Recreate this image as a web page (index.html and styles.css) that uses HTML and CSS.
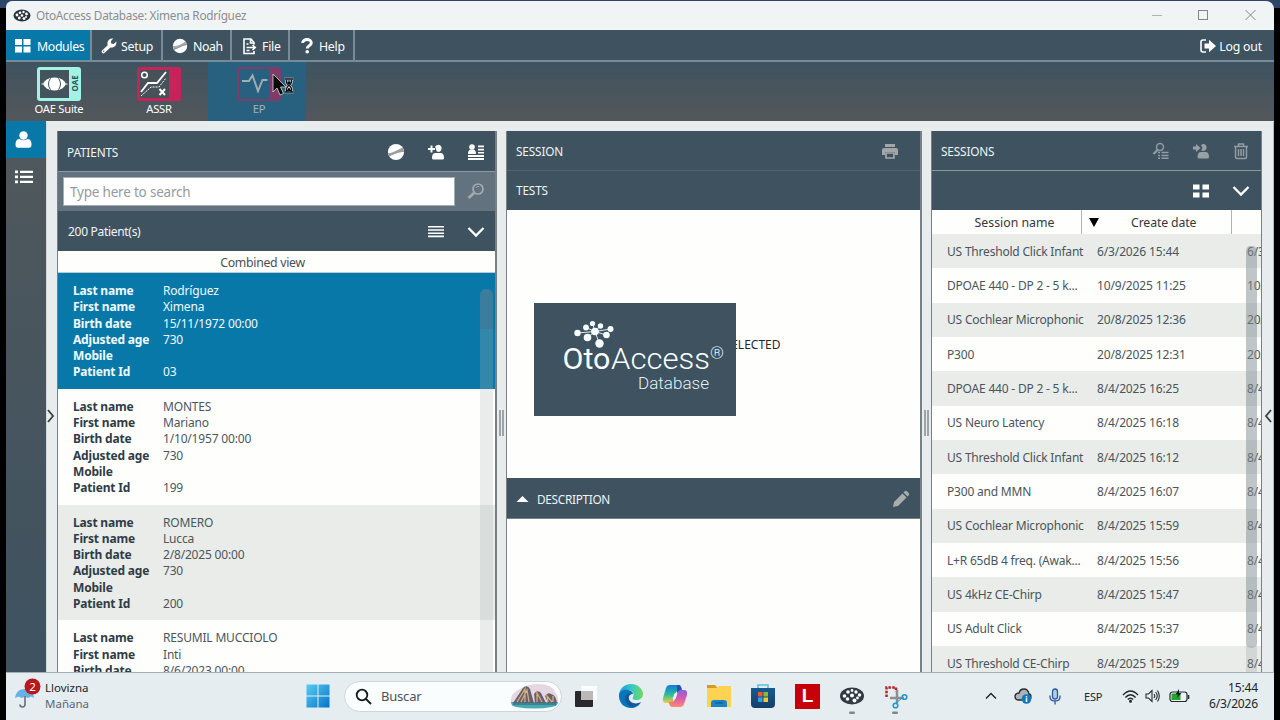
FILE: index.html
```
<!DOCTYPE html>
<html lang="es">
<head>
<meta charset="utf-8">
<title>OtoAccess Database</title>
<link rel="stylesheet" href="styles.css">
</head>
<body>
<div class="screen">
<div class="window">
  <header class="titlebar">
    <svg class="app-icon" width="18" height="13" viewBox="0 0 18 13"><ellipse cx="9" cy="6.5" rx="8.5" ry="6" fill="#29343c"/><g fill="#fff"><circle cx="4" cy="6" r="1.4"/><circle cx="7" cy="3.7" r="1.3"/><circle cx="10.5" cy="3" r="1.2"/><circle cx="13.5" cy="5" r="1.4"/><circle cx="9" cy="6.5" r="1.3"/><circle cx="6.3" cy="9" r="1.4"/><circle cx="11" cy="9.6" r="1.4"/><circle cx="13" cy="8" r="1"/></g></svg>
    <span class="title">OtoAccess Database: Ximena Rodríguez</span>
    <svg class="winctl" width="110" height="14" viewBox="0 0 110 14" fill="none" stroke="#858788"><path d="M3 7.5h10" stroke="#b0b1b2"/><rect x="49.500" y="2.500" width="9" height="9"/><path d="M96.500 2l10 10M106.500 2l-10 10"/></svg>
  </header>
  <nav class="menu">
    <div class="item active m1"><svg width="16" height="14" viewBox="0 0 16 14" fill="#fff"><path d="M0 0h7v6H0zM8.500 0h7v6h-7zM0 7.500h7v6H0zM8.500 7.500h7v6h-7z"/></svg>Modules</div>
    <div class="item m2"><svg width="16" height="16" viewBox="0 0 16 16"><path d="M2.500 13.500L9 7.500" stroke="#fff" stroke-width="3.600" stroke-linecap="round"/><path d="M15.300 3.600L12.700 6l-2.400-.4-.4-2.300L12.200.6A5 5 0 0 0 6.700 7.200L9 9.400a5 5 0 0 0 6.300-5.800z" fill="#fff"/><circle cx="2.700" cy="13.300" r=".7" fill="#3e5260"/></svg>Setup</div>
    <div class="item m3"><svg width="16" height="16" viewBox="0 0 16 16"><circle cx="8" cy="8" r="7.200" fill="#fff"/><path d="M.8 8C5 8.500 9 6 13.700 3.500L15.200 7C10 7.500 7 10 2 12z" fill="#a9adb0"/><path d="M1.500 11C6 11 9 7 15 6" stroke="#7c888f" fill="none" stroke-width=".6"/></svg>Noah</div>
    <div class="item m4"><svg width="14" height="17" viewBox="0 0 14 17" fill="none" stroke="#fff" stroke-width="1.600"><path d="M11 6.500V4.500L8 1H1v14.500h10V13M7.500 1v4H11M3.500 6h2M3.500 9.500h8M9.500 7l2.700 2.500L9.500 12M3.500 12.500h3"/></svg>File</div>
    <div class="item m5"><svg width="12" height="16" viewBox="0 0 12 16"><path d="M1.700 5C1.500.6 10.500.2 10.300 5c0 2.500-4.100 2.800-4.100 5.500" fill="none" stroke="#fff" stroke-width="2.900"/><circle cx="6.200" cy="13.700" r="1.800" fill="#fff"/></svg>Help</div>
    <div class="logout"><svg width="16" height="14" viewBox="0 0 16 14"><path d="M6 1H3Q1 1 1 3v8q0 2 2 2h3" fill="none" stroke="#fff" stroke-width="1.600"/><path d="M4.500 4.500H9V.8L16 7l-7 6.200V9.500H4.500z" fill="#fff"/></svg>Log out</div>
  </nav>
  <div class="modules">
    <div class="module"><svg width="46" height="36" viewBox="0 0 46 36"><rect x="1" y="1" width="44" height="34" rx="3" fill="#a2f2e5"/><rect x="4" y="4" width="29" height="28" fill="#44545d"/><path d="M5.500 18h26" stroke="#fff"/><ellipse cx="18.500" cy="18" rx="11" ry="6.500" fill="#fff"/><path d="M14.500 12.300q-4 5.700 0 11.400M22.500 12.300q4 5.700 0 11.400" stroke="#44545d" fill="none"/><text transform="translate(42 25.500) rotate(-90)" class="tag">OAE</text></svg><span>OAE Suite</span></div>
    <div class="module"><svg width="46" height="36" viewBox="0 0 46 36"><rect x="1" y="1" width="44" height="34" rx="3" fill="#c6235a"/><rect x="4" y="4" width="29" height="28" fill="#465158"/><g fill="none" stroke="#fff"><circle cx="8.500" cy="9" r="2.800" stroke-width="1.500"/><path d="M5 26l7-9h9l9-11" stroke-width="1.800"/><path d="M5 30l10-9h8l7-9" stroke-dasharray="2 1"/><path d="M23.500 23l5.500 6M29 23l-5.500 6" stroke-width="2"/></g><path d="M36 10v16M39 10v16" stroke="#d52761"/></svg><span>ASSR</span></div>
    <div class="module ep"><svg width="46" height="36" viewBox="0 0 46 36"><rect x="1" y="1" width="44" height="34" rx="3" fill="#803c66"/><rect x="3" y="3" width="31" height="30" fill="#28617f"/><path d="M6 15h7l3.500-5.500L22 25l4.500-11h5" fill="none" stroke="#a1afb5" stroke-width="1.900"/></svg><span>EP</span>
      <svg class="cursor" width="24" height="26" viewBox="0 0 24 26"><path d="M1 1v18l4-4 3 7 3.500-1.600-3-6.400H14z" fill="#080909" stroke="#d7d9da" stroke-width=".8"/><path d="M12.500 6h9M12.500 19h9M14.500 7v2.500l2 3-2 3v3M19.500 7v2.500l-2 3 2 3v3" stroke="#d5dadd" stroke-width="2.600" fill="none"/><path d="M12.500 6h9M12.500 19h9M14.500 7v2.500l2 3-2 3v3M19.500 7v2.500l-2 3 2 3v3" stroke="#101214" stroke-width="1.300" fill="none"/><path d="M14.500 18l2.500-3 2.500 3zM15 9h4l-2 3z"/></svg></div>
  </div>
  <main class="main">
    <aside class="side">
      <div class="sidebtn on"><svg width="17" height="17" viewBox="0 0 17 17" fill="#fff"><circle cx="8.500" cy="4.500" r="4.200"/><path d="M.5 13.500Q.5 8 4.500 8q4 2.500 8 0 4 0 4 5.500 0 3.300-2.500 3.300H3Q.5 16.800.5 13.500z"/></svg></div>
      <div class="sidebtn"><svg width="18" height="14" viewBox="0 0 18 14" fill="#fff"><path d="M0 .5h3v2.800H0zM0 5.500h3v2.800H0zM0 10.500h3v2.800H0zM5 .7h13V3H5zM5 5.700h13V8H5zM5 10.700h13V13H5z"/></svg></div>
    </aside>
    <div class="gap-left"><svg width="8" height="14" viewBox="0 0 8 14"><path d="M1 1l5 6-5 6" fill="none" stroke="#333f47" stroke-width="1.800"/></svg></div>
    <section class="panel patients">
      <div class="phead"><span>PATIENTS</span><div class="tools">
        <svg width="18" height="18" viewBox="0 0 16 16"><circle cx="8" cy="8" r="7.200" fill="#fff"/><path d="M.8 9C5 9 9 6.500 14 4L15.200 8C10 8 7 10 2 11.800z" fill="#999fa3"/></svg>
        <svg width="18" height="18" viewBox="0 0 18 18" fill="#fff"><path d="M1 6h7M4.500 2.500v7" stroke="#fff" stroke-width="2"/><path d="M8 3.500Q12 0 14.500 4 15 8 12 9q-3 0-3-3z"/><path d="M5 15q0-5 3.500-5h5q3.500 0 3.500 5 0 1.500-1.500 1.500h-9Q5 16.500 5 15z"/></svg>
        <svg width="18" height="18" viewBox="0 0 18 18" fill="#fff"><circle cx="5" cy="4" r="2.800"/><path d="M1 11Q1 7 3.500 6.500h3Q9 7 9 11zM11 2.500h6v1.700h-6zM11 5.700h6v1.700h-6zM11 8.900h6v1.700h-6zM1 12h16v2H1zM1 15h16v2H1z"/></svg>
      </div></div>
      <div class="search"><div class="box">Type here to search</div><svg width="18" height="18" viewBox="0 0 18 18" fill="none" stroke="#a6aaad"><circle cx="11" cy="7" r="5" stroke-width="1.700"/><path d="M7 11l-5.500 5" stroke-width="2.800"/><path d="M9 6q1-2 3-1.500"/></svg></div>
      <div class="phead count"><span>200 Patient(s)</span><div class="tools">
        <svg width="18" height="14" viewBox="0 0 18 14" fill="#fff"><path d="M1 1h16v1.600H1zM1 4.200h16v1.600H1zM1 7.400h16V9H1zM1 10.600h16v1.600H1z"/></svg>
        <svg width="18" height="12" viewBox="0 0 18 12" fill="none" stroke="#fff" stroke-width="2.300"><path d="M1.500 2L9 9.500 16.500 2"/></svg>
      </div></div>
      <div class="combined">Combined view</div>
      <div class="plist">
        <div class="patient sel"><b>Last name</b><span>Rodríguez</span><b>First name</b><span>Ximena</span><b>Birth date</b><span>15/11/1972 00:00</span><b>Adjusted age</b><span>730</span><b>Mobile</b><span></span><b>Patient Id</b><span>03</span></div>
        <div class="patient"><b>Last name</b><span>MONTES</span><b>First name</b><span>Mariano</span><b>Birth date</b><span>1/10/1957 00:00</span><b>Adjusted age</b><span>730</span><b>Mobile</b><span></span><b>Patient Id</b><span>199</span></div>
        <div class="patient alt"><b>Last name</b><span>ROMERO</span><b>First name</b><span>Lucca</span><b>Birth date</b><span>2/8/2025 00:00</span><b>Adjusted age</b><span>730</span><b>Mobile</b><span></span><b>Patient Id</b><span>200</span></div>
        <div class="patient"><b>Last name</b><span>RESUMIL MUCCIOLO</span><b>First name</b><span>Inti</span><b>Birth date</b><span>8/6/2023 00:00</span></div>
        <div class="track"><div class="thumb"></div></div>
      </div>
    </section>
    <div class="splitter"><i></i><i></i></div>
    <section class="panel session">
      <div class="phead faint"><span>SESSION</span><svg width="18" height="17" viewBox="0 0 18 17" fill="#a3a6a8"><path d="M4 1h10v3H4zM3 5h12q2 0 2 2v5h-3V9H4v3H1V7q0-2 2-2z"/><path d="M5 10h8v5H5z" fill="none" stroke="#a3a6a8" stroke-width="1.700"/></svg></div>
      <div class="phead tests"><span>TESTS</span></div>
      <div class="canvas"><span class="notest">NO TEST SELECTED</span>
        <div class="splash">
          <svg width="202" height="113" viewBox="0 0 202 113">
            <g stroke="#dce8ee" stroke-width="1"><path d="M60 28.500L42.500 30M60 28.500L51 24.500M60 28.500L57.500 20.500M60 28.500L65.500 23M60 28.500L75.500 26M60 28.500L71 32M60 28.500L52 35M60 28.500L64.500 41"/></g>
            <g fill="#f6ffff"><circle cx="60" cy="28.500" r="3.800"/><circle cx="42.500" cy="30" r="3.200"/><circle cx="51" cy="24.500" r="2.900"/><circle cx="57.500" cy="20.500" r="2.600"/><circle cx="65.500" cy="23" r="2.700"/><circle cx="75.500" cy="26" r="3"/><circle cx="71.500" cy="32" r="3.300"/><circle cx="52.500" cy="34.500" r="3.800"/><circle cx="64.500" cy="40.500" r="4.200"/></g>
            <text x="27.500" y="66" class="logo" textLength="48" lengthAdjust="spacingAndGlyphs">Oto</text><text x="76" y="66" class="logo thin" textLength="99" lengthAdjust="spacingAndGlyphs">Access</text><text x="175" y="55.500" class="reg" textLength="14" lengthAdjust="spacingAndGlyphs">®</text>
            <text x="103" y="85.500" class="db" textLength="71" lengthAdjust="spacingAndGlyphs">Database</text>
          </svg>
        </div>
      </div>
      <div class="phead desc"><svg width="13" height="8" viewBox="0 0 13 8"><path d="M6.500 1l6 6H.5z" fill="#fff"/></svg><span>DESCRIPTION</span><svg class="pencil" width="18" height="18" viewBox="0 0 18 18" fill="#a9acad"><path d="M1 17l1-5 8.500-8.500 4 4L6 16zM11.500 2.500L13 1q1-.7 2 .3L16.700 3q1 1 .3 2l-1.500 1.500z"/></svg></div>
      <div class="note"></div>
    </section>
    <div class="splitter"><i></i><i></i></div>
    <section class="panel sessions">
      <div class="phead line"><span>SESSIONS</span><div class="tools">
        <svg width="18" height="18" viewBox="0 0 18 18" fill="none" stroke="#929ca2" stroke-width="1.500"><circle cx="8" cy="5" r="3.500"/><path d="M5.500 8L1.500 12" stroke-width="2.300"/><path d="M6 10.500h2M9.500 10.500h7M6 13.500h2M9.500 13.500h7M6 16.200h2M9.500 16.200h7"/></svg>
        <svg width="18" height="18" viewBox="0 0 18 18" fill="#98a0a5"><path d="M1 4.500h3V2l4.500 4L4 10V7.500H1z"/><path d="M9 3q4-2.500 5.500 1.500Q15 8 12 9l-3-.5 1.500-2.500zM5.500 15q0-5 3.500-5h4.500q3.500 0 3.500 5 0 1.500-1.500 1.500H7Q5.500 16.500 5.500 15z"/></svg>
        <svg width="18" height="18" viewBox="0 0 18 18" fill="none" stroke="#929ca2" stroke-width="1.500"><path d="M2 4.500h14M6.500 4V2h5v2M3.500 5v10q0 1.500 1.500 1.500h8q1.500 0 1.500-1.500V5M6.500 7v7M9 7v7M11.500 7v7"/></svg>
      </div></div>
      <div class="phead row2"><span></span><div class="tools">
        <svg width="18" height="14" viewBox="0 0 18 14" fill="#fff"><path d="M1 .5h6.500v5H1zM10.500.5H17v5h-6.500zM1 8.500h6.500v5H1zM10.500 8.500H17v5h-6.500z"/></svg>
        <svg width="18" height="12" viewBox="0 0 18 12" fill="none" stroke="#fff" stroke-width="2.300"><path d="M1.500 2L9 9.500 16.500 2"/></svg>
      </div></div>
      <div class="table">
        <div class="tr th"><span>Session name</span><span><svg width="10" height="9" viewBox="0 0 10 9"><path d="M0 0h10L5 9z"/></svg>Create date</span><span></span></div>
        <div class="tr alt"><span>US Threshold Click Infant</span><span>6/3/2026 15:44</span><span>6/3/</span></div>
        <div class="tr"><span>DPOAE 440 - DP 2 - 5 k...</span><span>10/9/2025 11:25</span><span>10/</span></div>
        <div class="tr alt"><span>US Cochlear Microphonic</span><span>20/8/2025 12:36</span><span>20/</span></div>
        <div class="tr"><span>P300</span><span>20/8/2025 12:31</span><span>20/</span></div>
        <div class="tr alt"><span>DPOAE 440 - DP 2 - 5 k...</span><span>8/4/2025 16:25</span><span>8/4</span></div>
        <div class="tr"><span>US Neuro Latency</span><span>8/4/2025 16:18</span><span>8/4</span></div>
        <div class="tr alt"><span>US Threshold Click Infant</span><span>8/4/2025 16:12</span><span>8/4</span></div>
        <div class="tr"><span>P300 and MMN</span><span>8/4/2025 16:07</span><span>8/4</span></div>
        <div class="tr alt"><span>US Cochlear Microphonic</span><span>8/4/2025 15:59</span><span>8/4</span></div>
        <div class="tr"><span>L+R 65dB 4 freq. (Awak...</span><span>8/4/2025 15:56</span><span>8/4</span></div>
        <div class="tr alt"><span>US 4kHz CE-Chirp</span><span>8/4/2025 15:47</span><span>8/4</span></div>
        <div class="tr"><span>US Adult Click</span><span>8/4/2025 15:37</span><span>8/4</span></div>
        <div class="tr alt"><span>US Threshold CE-Chirp</span><span>8/4/2025 15:29</span><span>8/4</span></div>
        <div class="track2"><div class="thumb2"></div></div>
      </div>
    </section>
    <div class="gap-right"><svg width="8" height="14" viewBox="0 0 8 14"><path d="M7 1L2 7l5 6" fill="none" stroke="#333f47" stroke-width="1.800"/></svg></div>
  </main>
</div>
<footer class="taskbar">
  <div class="weather"><svg width="28" height="34" viewBox="0 0 28 34"><path d="M1 20Q2 11 11 11q8 0 9 9l-3-1.500-3 1.500-3-1.500L8 20l-3.500-1.500z" fill="#68b1e4"/><path d="M11 18v8q0 3-2.500 3T6 26.500" fill="none" stroke="#65717c" stroke-width="1.600"/><circle cx="18.500" cy="8.500" r="8" fill="#b71820"/><text x="18.500" y="12.800" class="badge">2</text></svg><div><p>Llovizna</p><p class="dim">Mañana</p></div></div>
  <div class="center">
    <svg class="start" width="24" height="24" viewBox="0 0 24 24"><defs><linearGradient id="win" x2="1" y2="1"><stop stop-color="#58cdf2"/><stop offset="1" stop-color="#0573c8"/></linearGradient></defs><path fill="url(#win)" d="M.5.500h11v11H.5zM12.500.500h11v11h-11zM.5 12.500h11v11H.5zM12.500 12.500h11v11h-11z"/></svg>
    <div class="tsearch"><svg width="17" height="17" viewBox="0 0 17 17" fill="none" stroke="#15191b" stroke-width="1.800"><circle cx="7" cy="7" r="5.300"/><path d="M11 11l5 5"/></svg><span>Buscar</span>
      <svg width="50" height="28" viewBox="0 0 50 28"><path d="M1 20Q0 12 8 8q8-6 20-6 14 0 17 8 4 5 3 11z" fill="#e6d6e2"/><path d="M1 20h47q0 4-6 5-18 3-36 0-5-1-5-5z" fill="#48a9b5"/><path d="M3 21L13 6q4-4 7 1l4 14zM25 21l-1-9q3-5 7-1l5 10zM38 21l-3-7q3-4 6-2 5 1 6 9z" fill="#665f70"/><path d="M7 20l8-13v13M11 20l6-12 2 12M27 20V11l5 9M38 20l-1-6 5 6M43 20v-6" stroke="#d5b078" fill="none" stroke-width="1.300"/><path d="M3 22h43" stroke="#2e798b" stroke-width="1.500"/></svg></div>
    <svg class="tview" width="24" height="24" viewBox="0 0 24 24"><rect x="1" y="7" width="18" height="16" rx="1" fill="#29282d"/><rect x="7" y="2" width="16" height="14" fill="#fff" opacity=".82"/><path d="M7 7h12v9H7z" fill="#bbb9b6"/></svg>
    <svg class="edge" width="26" height="26" viewBox="0 0 26 26"><defs><linearGradient id="eg" x2="1"><stop stop-color="#199bdb"/><stop offset=".55" stop-color="#39c9c2"/><stop offset="1" stop-color="#74d957"/></linearGradient></defs><path d="M1 13C1 6 6 1 13 1c7 0 12 5 12 10 0 4-3 6-7 6-3 0-4-1-3-3 2-4-1-7-5-7-5 0-8 4-9 6z" fill="url(#eg)"/><path d="M1 13c0-5 5-7 9-6 3 .6 5 2 5 4-5 0-6 4-4 7 3 4 8 4 12 1-2 4-6 6-10 6C6 25 1 20 1 13z" fill="#0874b9"/><path d="M10 10c-5 4-3 11 3 14 4 0 8-2 10-5-5 3-11 1-12-3-.4-2 0-4 2-5z" fill="#15589a"/></svg>
    <svg class="cop" width="26" height="24" viewBox="0 0 26 24"><defs><linearGradient id="c1" x2="0" y2="1"><stop stop-color="#1779dc"/><stop offset=".5" stop-color="#25b9a4"/><stop offset="1" stop-color="#f2d039"/></linearGradient><linearGradient id="c2" x2="0" y2="1"><stop stop-color="#8a61df"/><stop offset=".5" stop-color="#d95bb0"/><stop offset="1" stop-color="#ff8a6e"/></linearGradient></defs><path d="M8 1h8q2 0 3 4l.5 2H16q-2 0-3 3l-2 6q-1 3-4 3H4q-4 0-3-5L4 4q1-3 4-3z" fill="url(#c1)"/><path d="M18 23h-8q-2 0-3-4l-.5-1H9q3 0 4-3l2-6q1-3 4-3h3q4 0 3 5l-3 9q-1 3-4 3z" fill="url(#c2)"/><path d="M15 1h2q2 0 3 5h-2q-2 1-3 3z" fill="#2053ad"/><path d="M7 18q3 0 4-3l-1 6q-2 0-3-3z" fill="#ef8c3c"/><path d="M12.500 9.500h3l-2 5.500h-3z" fill="#eef2f3"/></svg>
    <svg class="folder" width="26" height="24" viewBox="0 0 26 24"><path d="M1 1h8l3 3H1z" fill="#d59b20"/><path d="M1 4h9l3-2h12v21H1z" fill="#ffd351"/><path d="M5 23v-4q0-3 3-3h10q3 0 3 3v4z" fill="#1683cb"/><path d="M9 19h8" stroke="#11659f" stroke-width="1.500"/></svg>
    <svg class="store" width="24" height="26" viewBox="0 0 24 26"><defs><linearGradient id="st" x2="0" y2="1"><stop stop-color="#175a91"/><stop offset="1" stop-color="#153f68"/></linearGradient></defs><path d="M7 6V2h10v4" fill="none" stroke="#5abfe5" stroke-width="1.600"/><path d="M0 5h24v16q0 4-4 4H4q-4 0-4-4z" fill="url(#st)"/><path d="M7 9h4.500v4.500H7z" fill="#f05632"/><path d="M12.500 9H17v4.500h-4.500z" fill="#86bc34"/><path d="M7 14.500h4.500V19H7z" fill="#29a4e6"/><path d="M12.500 14.500H17V19h-4.500z" fill="#fbc735"/></svg>
    <div class="lapp">L</div>
    <svg class="oto" width="24" height="28" viewBox="0 0 24 28"><ellipse cx="12" cy="10" rx="12" ry="8.500" fill="#303b43"/><g fill="#fff"><circle cx="4.500" cy="10" r="1.800"/><circle cx="8" cy="6" r="1.800"/><circle cx="12" cy="4.500" r="1.400"/><circle cx="16" cy="6" r="1.700"/><circle cx="19.500" cy="9" r="1.700"/><circle cx="12" cy="9.500" r="2"/><circle cx="7.500" cy="13" r="1.800"/><circle cx="14.500" cy="14.500" r="2"/><circle cx="17.500" cy="12" r="1.400"/></g><rect x="9" y="25.500" width="6" height="2.500" rx="1.200" fill="#818789"/></svg>
    <svg class="snip" width="24" height="30" viewBox="0 0 24 30"><path d="M2.500 12V2.500H12v4" fill="none" stroke="#bd1f22" stroke-width="2.500" stroke-dasharray="2.500 1.300"/><path d="M13 5v13M6 13h14" stroke="#8b8f91" stroke-width="2.500"/><circle cx="20.500" cy="12" r="2.300" fill="none" stroke="#2597cb" stroke-width="1.600"/><circle cx="11.500" cy="20.500" r="2.300" fill="none" stroke="#2597cb" stroke-width="1.600"/><path d="M12 18l6-5" stroke="#2597cb"/><rect x="8" y="26.500" width="6" height="2.500" rx="1.200" fill="#818789"/></svg>
  </div>
  <div class="tray">
    <svg class="t1" width="12" height="8" viewBox="0 0 12 8"><path d="M1 6.500l5-5 5 5" fill="none" stroke="#222" stroke-width="1.400"/></svg>
    <svg class="t2" width="18" height="16" viewBox="0 0 18 16"><path d="M4.500 12Q1 12 1 8.500T5 5q1-4 5-4t5 5q2 0 2 3t-3 3z" fill="#aeb3b6" stroke="#24292c" stroke-width="1.300"/><circle cx="12.500" cy="11" r="4.800" fill="#0c79bd"/><path d="M12.500 8v1.400M12.500 10.300v3.600" stroke="#fff" stroke-width="1.500"/></svg>
    <svg class="t3" width="12" height="17" viewBox="0 0 12 17" fill="none" stroke="#275a9e" stroke-width="1.300"><rect x="3.500" y="1" width="5" height="10" rx="2.500" fill="#b5cae1"/><path d="M1 7.500V9q0 4 5 4t5-4V7.500M6 13v3.500"/></svg>
    <span class="t4">ESP</span>
    <svg class="t5" width="17" height="13" viewBox="0 0 17 13" fill="none" stroke="#20272b" stroke-width="1.400"><path d="M1 5Q8.500-3 16 5M3.400 7.500Q8.500 2 13.600 7.500M5.800 9.500q2.700-2.700 5.400 0"/><circle cx="8.500" cy="11.200" r=".8"/></svg>
    <svg class="t6" width="15" height="14" viewBox="0 0 15 14" fill="none" stroke="#252b2e" stroke-width="1.100"><path d="M1 5h2.500L7 1.500v11L3.500 9H1zM9 5q1.500 2 0 4M10.700 3q3 4 0 8M12.500 1.500q3.500 5.500 0 11"/></svg>
    <svg class="t7" width="21" height="14" viewBox="0 0 21 14"><rect x="1" y="3" width="17" height="9.500" rx="2.500" fill="#edf3f4" stroke="#262c2e" stroke-width="1.200"/><path d="M2.500 4.500h9v6.500h-9z" fill="#22a62d"/><path d="M19.500 6v4" stroke="#262c2e" stroke-width="1.600"/><path d="M10 0L6.500 5.500H9L8 9l4.500-5H10z" fill="#17211b"/></svg>
    <div class="clock"><p>15:44</p><p>6/3/2026</p></div>
  </div>
</footer>
</div>
</body>
</html>
```
FILE: styles.css
```
* { box-sizing: border-box; }
body { margin: 0; background: #000; font-family: "Noto Sans", "Open Sans", sans-serif; font-size: 12.300px; }
p { margin: 0; }
svg { display: block; flex: none; }
.screen { width: 1280px; height: 720px; padding: 0 6px 0 6px; overflow: hidden; display: flex; flex-direction: column; background: linear-gradient(#2d4568, #2d4568) 0 0 / 100% 8px no-repeat #000; }
.window { height: 672px; flex: none; padding-top: 1px; display: flex; flex-direction: column; overflow: hidden; }
.titlebar { height: 29px; flex: none; background: #f1f4f4; border-radius: 6px 8px 0 0; display: flex; align-items: center; padding: 0 15px 1px 7px; }
.title { margin-left: 5px; color: #8b8e90; font-size: 11.800px; letter-spacing: -.270px; flex: 1; }
.menu { height: 32px; flex: none; background: #3e5260; border-bottom: 2px solid #788c98; display: flex; color: #fff; letter-spacing: -.250px; }
.item { display: flex; align-items: center; gap: 6px; padding: 2px 0 0 9px; border-right: 2px solid #788c98; white-space: nowrap; }
.active { background: #0878a8; }
.m1 { width: 86px; letter-spacing: -.350px; } .m2 { width: 71px; gap: 4px; } .m3 { width: 69px; gap: 5px; letter-spacing: -.400px; } .m4 { width: 58px; padding-left: 11px; gap: 5px; } .m5 { width: 65px; padding-left: 11px; }
.logout { margin-left: auto; margin-right: 12px; padding-top: 2px; display: flex; align-items: center; gap: 3px; letter-spacing: -.200px; }
.modules { height: 59px; flex: none; display: flex; background: linear-gradient(#3f5360, #53575a); color: #fff; padding-left: 3px; }
.module { width: 100px; padding-top: 4px; display: flex; flex-direction: column; align-items: center; font-size: 11.200px; line-height: 13px; letter-spacing: -.250px; position: relative; }
.ep { background: #28617f; width: 98px; margin-left: -1px; padding-left: 4px; color: #a2b2bb; }
.cursor { position: absolute; left: 64px; top: 11px; }
.tag { font: bold 8px "Noto Sans", sans-serif; letter-spacing: 0; fill: #31555b; }
.main { flex: 1; min-height: 0; display: flex; background: #e8ecec; border-top: 1px solid #e8ecec; }
.side { width: 40px; flex: none; margin-top: -1px; background: linear-gradient(#50585c, #3e5260); }
.sidebtn { height: 37px; display: flex; align-items: center; justify-content: center; padding-right: 5px; }
.on { background: #0878a8; }
.gap-left { width: 11px; flex: none; display: flex; align-items: center; padding: 38px 0 0 1px; border-left: 1px solid #d4d9da; }
.gap-left svg { margin-left: -1px; }
.gap-right { width: 12px; flex: none; display: flex; align-items: center; justify-content: center; padding-top: 38px; border-right: 1px solid #aebdc5; }
.splitter { width: 9px; flex: none; display: flex; justify-content: center; align-items: center; gap: 1px; padding-top: 52px; }
.splitter i { width: 2px; height: 26px; background: #9da3a6; }
.panel { margin-top: 9px; flex: none; display: flex; flex-direction: column; min-height: 0; border: 1px solid #788086; border-width: 0 1px; background: #fefffd; overflow: hidden; }
.patients { width: 440px; border-right-width: 2px; }
.session { width: 416px; border-right-width: 2px; }
.sessions { width: 331px; }
.phead { flex: none; height: 40px; background: #3e5260; color: #f0f4f5; display: flex; align-items: center; justify-content: space-between; padding: 1px 10px 0 9px; font-size: 11.800px; letter-spacing: -.150px; }
.tools { display: flex; align-items: center; gap: 22px; }
.search { height: 40px; flex: none; background: #62727f; border-top: 1px solid #8b99a3; padding: 5px 10px 6px 5px; display: flex; align-items: center; justify-content: space-between; }
.box { width: 392px; height: 29px; background: #fff; border: 1px solid #a5adb2; padding-left: 6px; line-height: 28px; color: #969a9c; font-size: 13.500px; letter-spacing: -.200px; }
.count { height: 40px; font-size: 12px; padding: 1px 10px 0 10px; letter-spacing: -.300px; }
.combined { height: 22px; flex: none; text-align: center; color: #4a5055; line-height: 23px; padding-right: 28px; border-bottom: 1px solid #b8cbd3; letter-spacing: -.300px; }
.plist { flex: 1; overflow: hidden; position: relative; font-size: 12px; }
.patient { height: 115.800px; padding: 10px 15px 0; display: grid; grid-template-columns: 91px 1fr; grid-auto-rows: 16.300px; line-height: 16.300px; color: #4b565d; white-space: nowrap; letter-spacing: -.180px; }
.patient > span { margin-left: -1px; }
.patient b { color: #303c46; font-weight: 700; }
.patient.alt, .tr.alt { background: #e9ece9; }
.patient.sel, .patient.sel b { background: #0878a8; color: #effaff; }
.track { position: absolute; right: 2px; top: 16px; width: 13px; bottom: 0; background: rgba(170,180,185,.25); border-radius: 6px 6px 0 0; }
.thumb { height: 40px; border-radius: 6px 6px 0 0; background: rgba(80,105,130,.35); }
.faint { border-bottom: 1px solid #51626e; padding-right: 21px; }
.tests { height: 39px; padding-top: 0; padding-bottom: 1px; }
.canvas { height: 268px; flex: none; display: flex; align-items: center; justify-content: center; position: relative; color: #26292b; }
.notest { font-size: 12px; width: 134px; text-align: right; white-space: nowrap; display: flex; justify-content: flex-end; }
.splash { position: absolute; left: 27px; top: 93px; width: 202px; height: 113px; background: #3e5260; }
.splash svg { margin-left: .5px; }
.logo { font: 29px Roboto, sans-serif; fill: #f8ffff; }
.logo.thin { font-weight: 300; }
.reg { font: 300 16px Roboto, sans-serif; fill: #e2f2f8; }
.db { font: 300 17px Roboto, sans-serif; fill: #e2f2f8; }
.desc { height: 41px; justify-content: flex-start; gap: 8px; border-bottom: 1px solid #788086; letter-spacing: -.300px; }
.pencil { margin-left: auto; }
.note { flex: 1; }
.line { border-bottom: 1px solid #8b99a3; padding-right: 11px; }
.row2 { height: 39px; padding: 0 11px 0 9px; }
.table { flex: 1; position: relative; overflow: hidden; font-size: 12px; color: #4a555c; letter-spacing: -.130px; }
.tr { height: 34.340px; display: grid; grid-template-columns: 150px 150px 1fr; align-items: center; white-space: nowrap; }
.tr > span { padding-left: 15px; }
.tr > span:nth-child(1) { letter-spacing: -.200px; }
.tr.th { height: 24px; font-size: 12.300px; color: #32383b; }
.tr.th span { height: 24px; line-height: 25px; border-right: 1px solid #aeb3b5; display: flex; align-items: center; justify-content: center; padding-left: 16px; }
.tr.th span:nth-child(1) { letter-spacing: 0; }
.tr.th span:nth-child(2) { justify-content: flex-start; padding-left: 7px; gap: 32px; }
.tr.th span:nth-child(3) { border: 0; }
.track2 { position: absolute; right: 4px; top: 36px; width: 11px; bottom: 0; background: rgba(145,152,158,.25); border-radius: 5px 5px 0 0; }
.thumb2 { height: 402px; background: rgba(130,138,146,.35); border-radius: 5px; }
.taskbar { height: 48px; flex: none; background: #e6edf1; border-top: 1px solid #a5b0b6; position: relative; display: grid; grid-template-columns: 300px 645px 1fr; color: #20262a; padding-bottom: 1px; }
.weather { display: flex; padding: 5px 0 0 8px; gap: 3px; font-size: 11.500px; line-height: 16px; }
.weather > div { padding-top: 2px; }
.dim { color: #5e676d; }
.badge { font: 11.500px "Noto Sans", sans-serif; fill: #fff; text-anchor: middle; }
.center { display: flex; align-items: center; }
.center > svg, .tsearch, .lapp { flex: none; }
.tsearch { width: 218px; height: 31px; margin-left: 14px; border-radius: 16px; background: #fafdfd; border: 1px solid #cfd6d9; display: flex; align-items: center; padding: 0 1px 0 10px; font-size: 13px; letter-spacing: -.200px; color: #4b5358; }
.tsearch span { margin-left: 9px; flex: 1; }
.tview { margin-left: 12px; } .edge { margin-left: 20px; } .cop { margin-left: 18px; } .folder { margin-left: 18px; } .store { margin-left: 19px; }
.lapp { width: 25px; height: 25px; background: #c60008; color: #fff; margin-left: 20px; font: bold 19px/24px "Liberation Sans", sans-serif; text-align: center; }
.oto { margin: 7px 0 0 20px; } .snip { margin: 7px 0 0 20px; }
.tray { display: flex; align-items: center; padding-left: 34px; font-size: 12px; }
.t2 { margin-left: 17px; } .t3 { margin-left: 17px; } .t4 { margin-left: 23px; width: 20px; font-size: 11px; letter-spacing: -.200px; } .t5 { margin-left: 18px; } .t6 { margin-left: 6px; } .t7 { margin-left: 9px; }
.clock { margin-left: auto; padding-right: 16px; text-align: right; line-height: 16px; font-size: 12px; letter-spacing: -.150px; }
```
